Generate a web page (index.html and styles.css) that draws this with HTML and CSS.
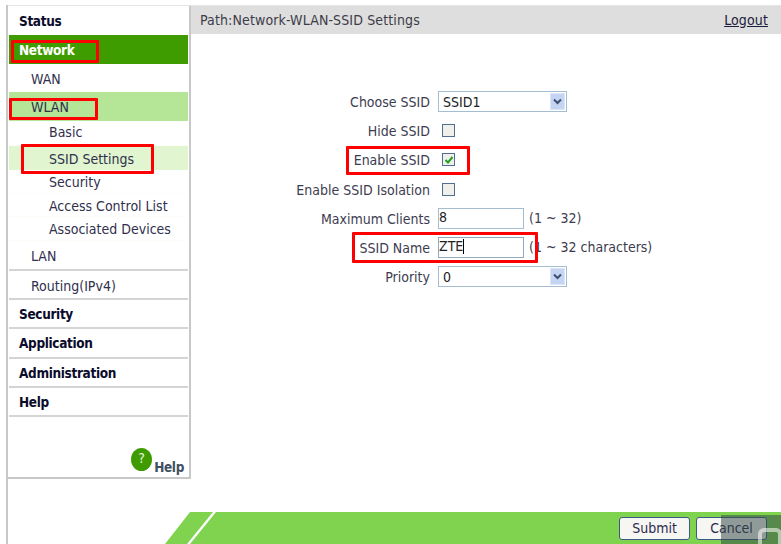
FILE: index.html
```html
<!DOCTYPE html>
<html lang="en">
<head>
    <meta charset="UTF-8">
    <meta name="viewport" content="width=device-width, initial-scale=1.0">
    <title>SSID Settings</title>
    <link rel="stylesheet" href="styles.css">
</head>
<body>
    <div class="page">
        <div class="frame">
            <div class="main">
                <div class="sidebar">
                    <div class="menu">
                        <div class="item top">Status</div>
                        <div class="item top active">Network</div>
                        <div class="item sub tight">WAN</div>
                        <div class="item sub current">WLAN</div>
                        <div class="leaf first">Basic</div>
                        <div class="leaf selected">SSID Settings</div>
                        <div class="leaf short">Security</div>
                        <div class="leaf short">Access Control List</div>
                        <div class="leaf short">Associated Devices</div>
                        <div class="item sub line lan">LAN</div>
                        <div class="item sub line">Routing(IPv4)</div>
                        <div class="item top line">Security</div>
                        <div class="item top line">Application</div>
                        <div class="item top line">Administration</div>
                        <div class="item top line">Help</div>
                    </div>
                    <div class="help">
                        <span class="help-icon">?</span>
                        <span class="help-text">Help</span>
                    </div>
                </div>
                <div class="content">
                    <div class="path-bar">
                        <span>Path:Network-WLAN-SSID Settings</span>
                        <a class="logout" href="#">Logout</a>
                    </div>
                    <div class="form">
                        <div class="label">Choose SSID</div>
                        <div class="field">
                            <div class="select">SSID1<span class="arrow"><svg width="9" height="7" viewBox="0 0 9 7"><path d="M1 1.5 L4.5 5 L8 1.5" fill="none" stroke="#3b4f75" stroke-width="2"/></svg></span></div>
                        </div>
                        <div class="label">Hide SSID</div>
                        <div class="field"><span class="check"></span></div>
                        <div class="label">Enable SSID</div>
                        <div class="field">
                            <span class="check"><svg width="10" height="10" viewBox="0 0 10 10"><path d="M1.5 5 L4 7.5 L8.5 2" fill="none" stroke="#21a121" stroke-width="2"/></svg></span>
                        </div>
                        <div class="label">Enable SSID Isolation</div>
                        <div class="field"><span class="check"></span></div>
                        <div class="label">Maximum Clients</div>
                        <div class="field"><div class="input">8</div><span class="hint">(1 ~ 32)</span></div>
                        <div class="label">SSID Name</div>
                        <div class="field"><div class="input focus">ZTE<span class="caret"></span></div><span class="hint">(1 ~ 32 characters)</span></div>
                        <div class="label">Priority</div>
                        <div class="field">
                            <div class="select">0<span class="arrow"><svg width="9" height="7" viewBox="0 0 9 7"><path d="M1 1.5 L4.5 5 L8 1.5" fill="none" stroke="#3b4f75" stroke-width="2"/></svg></span></div>
                        </div>
                    </div>
                </div>
            </div>
            <div class="footer">
                <button class="btn">Submit</button>
                <button class="btn">Cancel</button>
            </div>
        </div>

        <!-- red marks drawn on top of the screenshot -->
        <div class="mark mark-network"></div>
        <div class="mark mark-wlan"></div>
        <div class="mark mark-ssid"></div>
        <div class="mark mark-enable"></div>
        <div class="mark mark-name"></div>
        <div class="stamp"></div>
        <div class="stamp-ring"></div>
    </div>
</body>
</html>
```

FILE: styles.css
```css
body {
    margin: 0;
    background: #fff;
    font-family: 'DejaVu Sans Condensed', 'DejaVu Sans', sans-serif;
    font-stretch: condensed;
    font-size: 14px;
    color: #333;
}
.page {
    position: relative;
    width: 781px;
    height: 544px;
    overflow: hidden;
    box-sizing: border-box;
    padding: 5px 0 0 6px;
}
.frame {
    border-left: 2px solid #c8c8c8;
    height: 539px;
    display: flex;
    flex-direction: column;
}
.main {
    display: flex;
    align-items: flex-start;
    height: 507px;
    border-top: 1px solid #e4e4e4;
}
.sidebar {
    width: 183px;
    height: 473px;
    flex: none;
    box-sizing: border-box;
    border-right: 2px solid #c8c8c8;
    border-bottom: 2px solid #c8c8c8;
    display: flex;
    flex-direction: column;
    justify-content: space-between;
}
.item {
    height: 29px;
    line-height: 30px;
    box-sizing: border-box;
    margin: 0 1px;
}
.item.tight {
    height: 28px;
    line-height: 30px;
}
.item.top {
    padding-left: 10px;
    font-size: 13.5px;
    letter-spacing: -0.35px;
    font-weight: bold;
    color: #0b0b2c;
}
.item.sub {
    padding-left: 22px;
    color: #30304c;
}
.item.line {
    border-bottom: 2px solid #d4d4d4;
    height: 29.2px;
}
.item.top.line {
    line-height: 28px;
}
.item.lan {
    height: 30px;
}
.item.active {
    background: #3f9c00;
    color: #fff;
}
.item.current {
    background: #b5e597;
}
.leaf {
    margin: 0 1px;
    padding-left: 40px;
    color: #30304c;
    box-sizing: border-box;
    border-bottom: 1px solid #fbfdf6;
}
.leaf.first {
    height: 25px;
    line-height: 23px;
}
.leaf.selected {
    height: 24px;
    line-height: 26px;
    background: #e0f5d0;
    border-bottom: none;
}
.leaf.short {
    height: 23.7px;
    line-height: 25px;
}
.help {
    display: flex;
    justify-content: flex-end;
    align-items: flex-end;
    padding: 0 5px 1px 0;
    gap: 2px;
}
.help-icon {
    width: 21px;
    height: 23px;
    border-radius: 50%;
    background: #3f9c00;
    color: #e8f5e0;
    text-align: center;
    font-size: 14px;
    line-height: 21px;
    margin-bottom: 5px;
}
.help-text {
    font-size: 13.5px;
    letter-spacing: -0.35px;
    font-weight: bold;
    color: #3f4f60;
    line-height: 17px;
}
.content {
    flex: 1;
}
.path-bar {
    height: 28px;
    background: #dedede;
    display: flex;
    justify-content: space-between;
    align-items: center;
    padding: 0 13px 0 9px;
    color: #3c3c48;
    letter-spacing: 0.13px;
}
.logout {
    color: #1c1c3c;
}
.form {
    display: grid;
    grid-template-columns: 239px 1fr;
    column-gap: 8px;
    grid-auto-rows: 29.17px;
    align-items: center;
    margin-top: 53px;
}
.label {
    text-align: right;
    color: #3c3c50;
    padding-top: 1px;
}
.field {
    display: flex;
    align-items: center;
    gap: 5px;
}
.select {
    width: 129px;
    height: 21px;
    box-sizing: border-box;
    border: 1px solid #a5bdd0;
    padding-left: 4px;
    line-height: 20px;
    color: #222;
    position: relative;
}
.arrow {
    position: absolute;
    right: 1px;
    top: 1px;
    width: 15px;
    height: 17px;
    background: #c4d4f2;
    border: 1px solid #dbe5f8;
    box-sizing: border-box;
    display: flex;
    align-items: center;
    justify-content: center;
}
.check {
    width: 13px;
    height: 13px;
    margin-left: 4px;
    box-sizing: border-box;
    border: 1px solid #4b6f96;
    background: #f0f0ea;
    display: flex;
    align-items: center;
    justify-content: center;
}
.input {
    width: 86px;
    height: 21px;
    box-sizing: border-box;
    border: 1px solid #a5bdd0;
    padding-left: 0;
    line-height: 17px;
    color: #222;
    display: flex;
}
.input.focus {
    border-color: #8fa9bf;
}
.caret {
    width: 1px;
    height: 15px;
    background: #000;
    margin-top: 1px;
}
.hint {
    color: #3c3c50;
}
.footer {
    margin-left: 157px;
    height: 32px;
    background: #7fd34e;
    clip-path: polygon(25px 0, 100% 0, 100% 100%, 0 100%);
    display: flex;
    justify-content: flex-end;
    gap: 6px;
    padding: 5px 14px 0 0;
    box-sizing: border-box;
    position: relative;
}
/* the white slash through the green band */
.footer::before {
    content: "";
    position: absolute;
    left: 22px;
    top: 0;
    width: 29px;
    height: 32px;
    background: #fff;
    clip-path: polygon(26px 0, 29px 0, 3px 100%, 0 100%);
}
.btn {
    width: 71px;
    height: 23px;
    border: 1px solid #3c5a84;
    border-radius: 3px;
    background: #f6f6f2;
    color: #2a2a50;
    font-family: inherit;
    font-stretch: inherit;
    font-size: 14px;
    line-height: 19px;
    padding: 0;
}
.mark {
    position: absolute;
    box-sizing: border-box;
    border: 3px solid #f00;
    border-radius: 1px;
}
.mark-network { left: 11px; top: 40px; width: 88px; height: 23px; }
.mark-wlan { left: 9px; top: 98px; width: 89px; height: 22px; }
.mark-ssid { left: 21px; top: 144px; width: 133px; height: 30px; }
.mark-enable { left: 346px; top: 146px; width: 124px; height: 29px; }
.mark-name { left: 352px; top: 232px; width: 186px; height: 31px; }
.stamp {
    position: absolute;
    left: 721px;
    top: 515px;
    width: 60px;
    height: 29px;
    background: rgba(50, 70, 70, 0.52);
}
.stamp-ring {
    position: absolute;
    left: 758px;
    top: 528px;
    width: 24px;
    height: 30px;
    box-sizing: border-box;
    border: 4px solid rgba(255, 255, 255, 0.55);
    border-radius: 6px;
}
```
